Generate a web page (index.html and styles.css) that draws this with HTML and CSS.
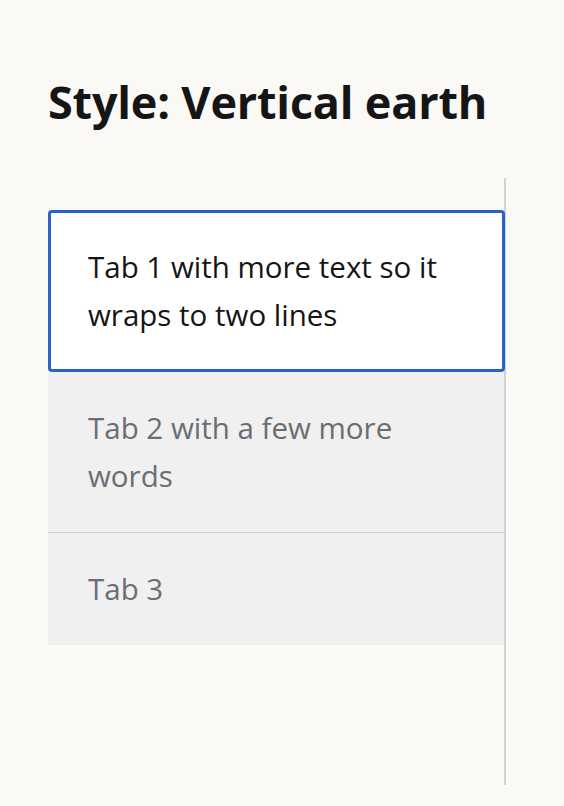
FILE: index.html
```html
<!DOCTYPE html>
<html lang="en">
<head>
<meta charset="utf-8">
<title>Vertical earth tabs</title>
<link rel="stylesheet" href="styles.css">
</head>
<body>
<main class="page">
  <h1 class="title">Style: Vertical earth</h1>
  <div class="tablist" role="tablist" aria-orientation="vertical">
    <button class="tab tab--active" role="tab" aria-selected="true">Tab 1 with more text so it wraps to two lines</button>
    <button class="tab" role="tab" aria-selected="false">Tab 2 with a few more words</button>
    <button class="tab" role="tab" aria-selected="false">Tab 3</button>
  </div>
</main>
</body>
</html>
```
FILE: styles.css
```css
* { box-sizing: border-box; }
html, body { margin: 0; padding: 0; }
body {
  background: #faf9f5;
  font-family: "Open Sans", "Noto Sans", sans-serif;
  color: #151515;
}
.page {
  padding: 0 0 0 48px;
}
.title {
  margin: 0;
  padding-top: 72px;
  font-size: 45px;
  line-height: 60px;
  font-weight: 700;
  letter-spacing: -0.2px;
}
.tablist {
  margin-top: 46px;
  width: 458px;
  height: 607px;
  padding-top: 32px;
  border-right: 2px solid #d2d2d2;
  display: flex;
  flex-direction: column;
}
.tab {
  display: block;
  width: 456px;
  text-align: left;
  font-family: inherit;
  font-size: 29.5px;
  line-height: 48px;
  color: #6a6e73;
  background: #f0f0f0;
  border: none;
  padding: 32px 40px;
  margin: 0;
}
.tab + .tab {
  border-top: 1px solid #d2d2d2;
}
.tab--active {
  width: 457px;
  background: #ffffff;
  color: #151515;
  border: 3px solid #2a62c9;
  border-radius: 4px;
  padding: 30px 37px 30px 37px;
}
.tab--active + .tab { border-top: none; }
```
